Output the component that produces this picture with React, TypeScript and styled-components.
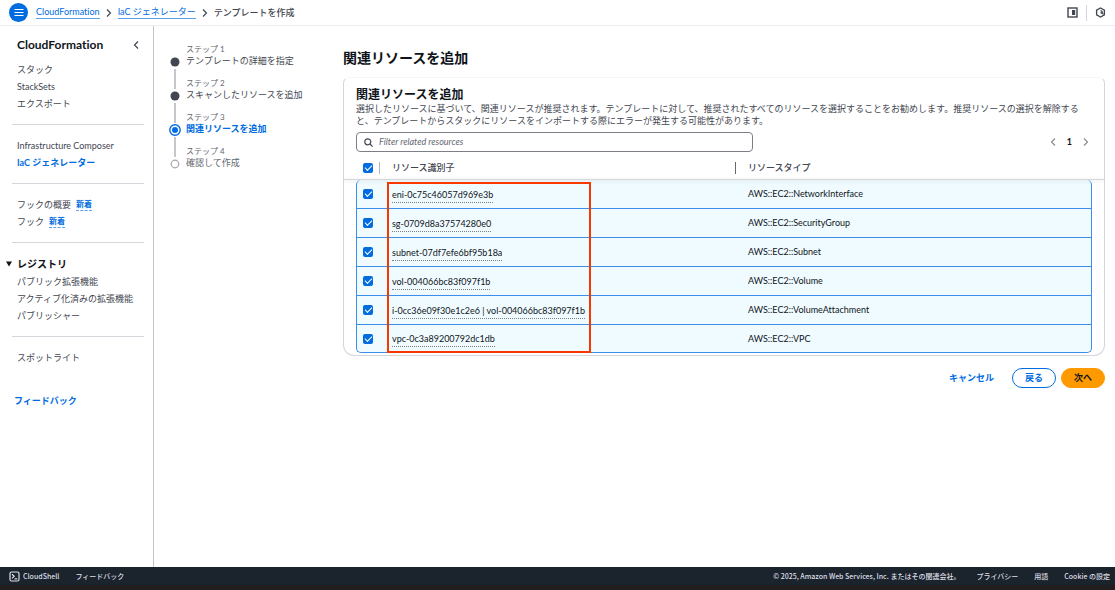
import React from "react";
import styled, { createGlobalStyle, css } from "styled-components";

const BLUE = "#006ce0";
const INK = "#0f141a";
const TEXT = "#424650";
const MUTED = "#656871";
const LINE = "#d5d5dc";

const GlobalStyle = createGlobalStyle`
  * { box-sizing: border-box; }
  body {
    margin: 0;
    background: #fff;
    color: ${TEXT};
    font-family: Lato, "Noto Sans CJK JP", sans-serif;
    font-size: 9px;
    line-height: 12px;
    font-variant-ligatures: none;
  }
  button, input { font: inherit; }
  a { color: inherit; text-decoration: none; }
`;

const Page = styled.div`
  min-height: 100vh;
  display: flex;
  flex-direction: column;
`;

const TopBar = styled.header`
  display: flex;
  align-items: center;
  justify-content: space-between;
  height: 26px;
  padding: 0 9px;
  border-bottom: 1px solid #ededf0;
`;

const Cluster = styled.div<{ $gap: number }>`
  display: flex;
  align-items: center;
  gap: ${(p) => p.$gap}px;
`;

const MenuButton = styled.button`
  display: grid;
  place-items: center;
  width: 19px;
  height: 19px;
  padding: 0;
  border: 0;
  border-radius: 50%;
  background: ${BLUE};
`;

const IconButton = styled.button`
  display: grid;
  place-items: center;
  padding: 0;
  border: 0;
  background: none;
  color: ${TEXT};
`;

const Crumbs = styled.nav`
  display: flex;
  align-items: center;
  gap: 5px;
  color: ${TEXT};
  font-weight: 500;
`;

const CrumbLink = styled.a`
  color: ${BLUE};
  font-weight: 400;
  border-bottom: 1px solid #5a9fea;
`;

const Separator = styled.span`
  width: 1px;
  height: 16px;
  background: ${LINE};
`;

const Body = styled.div`
  flex: 1;
  display: flex;
`;

const Sidebar = styled.aside`
  flex: 0 0 154px;
  padding: 10px 8px 0 12px;
  border-right: 1px solid #c3c4ca;
`;

const SideTitle = styled.div`
  display: flex;
  align-items: center;
  justify-content: space-between;
  height: 17px;
  padding: 0 5px;
  margin-bottom: 8px;
  color: ${INK};
  font-size: 12px;
  font-weight: 700;
`;

const NavGroup = styled.ul`
  list-style: none;
  margin: 0;
  padding: 0 0 12px 5px;
`;

const NavItem = styled.li<{ $active?: boolean }>`
  display: flex;
  align-items: center;
  gap: 5px;
  height: 17px;
  white-space: nowrap;
  ${(p) => p.$active && css`color: ${BLUE}; font-weight: 700;`}
`;

const Rule = styled.hr`
  height: 1px;
  margin: 0 1px 12px 0;
  border: 0;
  background: ${LINE};
`;

const NewBadge = styled.a`
  color: ${BLUE};
  font-size: 8px;
  line-height: 11px;
  font-weight: 700;
  border-bottom: 1px dashed #5a9fea;
`;

const SectionToggle = styled.button`
  display: flex;
  align-items: center;
  gap: 5px;
  height: 18px;
  margin-left: -6px;
  padding: 0;
  border: 0;
  background: none;
  color: ${INK};
  font-size: 10px;
  font-weight: 700;
`;

const FeedbackLink = styled.a`
  display: block;
  margin: 17px 0 0 2px;
  color: ${BLUE};
  font-weight: 700;
`;

const Steps = styled.ol`
  flex: 0 0 189px;
  list-style: none;
  margin: 0;
  padding: 17px 0 0 15px;
`;

const Step = styled.li`
  display: flex;
  gap: 5px;
  height: 34px;
`;

const StepRail = styled.span`
  display: flex;
  flex-direction: column;
  align-items: center;
  width: 12px;
  padding-top: 13px;
`;

const RailLine = styled.i`
  flex: 1;
  width: 2px;
  margin: 1px 0 -12px;
  background: #c6c6cd;
`;

const StepText = styled.div<{ $state: string }>`
  white-space: nowrap;
  color: ${(p) => (p.$state === "todo" ? MUTED : p.$state === "current" ? BLUE : TEXT)};
  font-weight: ${(p) => (p.$state === "current" ? 700 : 400)};
`;

const StepLabel = styled.div`
  color: ${MUTED};
  font-size: 8px;
  font-weight: 400;
`;

const Main = styled.main`
  flex: 1;
  min-width: 0;
  padding: 22px 10px 0 0;
`;

const PageTitle = styled.h1`
  margin: 0 0 9px;
  color: ${INK};
  font-size: 14px;
  line-height: 20px;
`;

const Card = styled.section`
  border: 1px solid ${LINE};
  border-top-color: #f6f6f8;
  border-radius: 6px 6px 11px 11px;
  padding: 9px 12px 2px;
`;

const CardTitle = styled.h2`
  margin: 0;
  color: ${INK};
  font-size: 12px;
  line-height: 16px;
`;

const Description = styled.p`
  margin: 0 0 5px;
`;

const Tools = styled.div`
  display: flex;
  align-items: center;
  justify-content: space-between;
`;

const SearchBox = styled.label`
  display: flex;
  align-items: center;
  gap: 6px;
  width: 54%;
  height: 20px;
  padding: 0 7px;
  border: 1px solid #7d7f87;
  border-radius: 4px;
  color: ${TEXT};
`;

const SearchInput = styled.input`
  flex: 1;
  min-width: 0;
  padding: 0;
  border: 0;
  outline: 0;
  background: none;
  &::placeholder { color: ${MUTED}; font-style: italic; opacity: 1; }
`;

const Pager = styled.nav`
  display: flex;
  align-items: center;
  gap: 10px;
  padding-right: 2px;
  color: ${INK};
  font-weight: 700;
`;

const PagerButton = styled(IconButton)`
  color: #8c8c94;
`;

const TableWrap = styled.div`
  position: relative;
`;

const Table = styled.table`
  width: 100%;
  table-layout: fixed;
  border-collapse: separate;
  border-spacing: 0;
  color: ${INK};
`;

const HeadRow = styled.tr`
  position: relative;
  height: 28px;
  th:first-child::after {
    content: "";
    position: absolute;
    left: -12px;
    right: -12px;
    bottom: 0;
    height: 1px;
    background: ${LINE};
    box-shadow: 0 1px 4px rgba(15, 20, 26, 0.18);
  }
`;

const HeadCell = styled.th`
  padding: 3px 0 0;
  text-align: left;
  font-weight: 500;
  color: ${TEXT};
`;

const HeadLabel = styled.span<{ $divider?: string }>`
  display: flex;
  align-items: center;
  height: 12px;
  ${(p) => p.$divider && css`border-right: 1px solid ${p.$divider};`}
`;

const SelectAllLabel = styled(HeadLabel)`
  width: 24px;
  padding-left: 7px;
`;

const IdLabel = styled(HeadLabel)`
  margin-right: 12px;
`;

const Row = styled.tr`
  height: 29px;
  td {
    padding: 0;
    background: #f0fbff;
    border-bottom: 1px solid #3b8fe8;
  }
  td:first-child { border-left: 1px solid #3b8fe8; }
  td:last-child { border-right: 1px solid #3b8fe8; }
  &:first-child td:first-child { border-top-left-radius: 5px; }
  &:first-child td:last-child { border-top-right-radius: 5px; }
  &:last-child { height: 28px; }
  &:last-child td:first-child { border-bottom-left-radius: 5px; }
  &:last-child td:last-child { border-bottom-right-radius: 5px; }
`;

const CheckWrap = styled.div`
  padding-left: 6px;
`;

const Checkbox = styled.input`
  appearance: none;
  display: grid;
  place-items: center;
  width: 10px;
  height: 10px;
  margin: 0;
  border-radius: 2px;
  background: ${BLUE};
  &:checked::before {
    content: "";
    width: 6px;
    height: 3px;
    border-left: 1px solid #fff;
    border-bottom: 1px solid #fff;
    transform: rotate(-45deg);
    margin-bottom: 2px;
  }
`;

const ResourceId = styled.a`
  display: inline-block;
  margin-top: 1px;
  line-height: 15px;
  border-bottom: 1px dotted #7d7f87;
`;

const Highlight = styled.div`
  position: absolute;
  left: 31px;
  top: 30px;
  width: 204px;
  bottom: 0;
  border: 2px solid #f93800;
  pointer-events: none;
`;

const Actions = styled.div`
  display: flex;
  justify-content: flex-end;
  gap: 5px;
  margin-top: 12px;
`;

const Button = styled.button<{ $kind: "link" | "normal" | "primary" }>`
  height: 20px;
  min-width: 44px;
  padding: 0 12px;
  border: 1px solid transparent;
  border-radius: 10px;
  background: none;
  color: ${BLUE};
  font-weight: 700;
  line-height: 12px;
  ${(p) => p.$kind === "normal" && css`border-color: ${BLUE};`}
  ${(p) => p.$kind === "primary" && css`background: #ff9900; border-color: #ff9900; color: ${INK};`}
`;

const Footer = styled.footer`
  display: flex;
  align-items: center;
  justify-content: space-between;
  height: 23px;
  padding: 0 5px 0 9px;
  border-bottom: 5px solid #211e1f;
  background: #1b232d;
  color: #dedee3;
  font-family: "Noto Sans CJK JP", sans-serif;
  font-size: 7px;
  font-weight: 500;
`;

const FooterLink = styled.a`
  display: flex;
  align-items: center;
  gap: 3px;
`;

const Chevron = ({ dir }: { dir: "left" | "right" }) => (
  <svg width="8" height="8" viewBox="0 0 8 8" fill="none" stroke="currentColor" strokeWidth="1.2">
    <path d={dir === "left" ? "M6 .5 2.5 4 6 7.5" : "M2 .5 5.5 4 2 7.5"} />
  </svg>
);

const StepDot = ({ state }: { state: string }) => {
  if (state === "current")
    return (
      <svg width="12" height="12" viewBox="0 0 12 12">
        <circle cx="6" cy="6" r="5.2" fill="#fff" stroke={BLUE} strokeWidth="1.4" />
        <circle cx="6" cy="6" r="3" fill={BLUE} />
      </svg>
    );
  return (
    <svg width="12" height="12" viewBox="0 0 12 12">
      {state === "done" ? (
        <circle cx="6" cy="6" r="4.5" fill={TEXT} />
      ) : (
        <circle cx="6" cy="6" r="3.8" fill="#fff" stroke="#a4a4ad" strokeWidth="1.2" />
      )}
    </svg>
  );
};

const steps = [
  { label: "ステップ 1", title: "テンプレートの詳細を指定", state: "done" },
  { label: "ステップ 2", title: "スキャンしたリソースを追加", state: "done" },
  { label: "ステップ 3", title: "関連リソースを追加", state: "current" },
  { label: "ステップ 4", title: "確認して作成", state: "todo" },
];

const resources = [
  ["eni-0c75c46057d969e3b", "AWS::EC2::NetworkInterface"],
  ["sg-0709d8a37574280e0", "AWS::EC2::SecurityGroup"],
  ["subnet-07df7efe6bf95b18a", "AWS::EC2::Subnet"],
  ["vol-004066bc83f097f1b", "AWS::EC2::Volume"],
  ["i-0cc36e09f30e1c2e6 | vol-004066bc83f097f1b", "AWS::EC2::VolumeAttachment"],
  ["vpc-0c3a89200792dc1db", "AWS::EC2::VPC"],
];

export default function App() {
  return (
    <Page lang="ja">
      <GlobalStyle />
      <TopBar>
        <Cluster $gap={8}>
          <MenuButton aria-label="メニュー">
            <svg width="10" height="9" viewBox="0 0 10 9" stroke="#fff" strokeWidth="1">
              <path d="M.5 1.5h9M.5 4.5h9M.5 7.5h9" />
            </svg>
          </MenuButton>
          <Crumbs>
            <CrumbLink href="#">CloudFormation</CrumbLink>
            <Chevron dir="right" />
            <CrumbLink href="#">IaC ジェネレーター</CrumbLink>
            <Chevron dir="right" />
            <span>テンプレートを作成</span>
          </Crumbs>
        </Cluster>
        <Cluster $gap={8}>
          <IconButton aria-label="分割パネル">
            <svg width="11" height="11" viewBox="0 0 11 11">
              <rect x="1" y="1" width="9" height="9" fill="none" stroke="currentColor" strokeWidth="1.4" />
              <path d="M5 3h3.2v5H5z" fill="currentColor" />
            </svg>
          </IconButton>
          <Separator />
          <IconButton aria-label="設定">
            <svg width="11" height="11" viewBox="0 0 11 11" fill="none" stroke="currentColor" strokeWidth="1.3">
              <path d="M5.5 1 9.4 3.2v4.6L5.5 10 1.6 7.8V3.2z" />
              <path d="M5.5 5.5 8.6 7.2M5.5 3.6a1.9 1.9 0 0 1 1.3 3.2" />
            </svg>
          </IconButton>
        </Cluster>
      </TopBar>

      <Body>
        <Sidebar>
          <SideTitle>
            CloudFormation
            <IconButton aria-label="閉じる"><Chevron dir="left" /></IconButton>
          </SideTitle>
          <NavGroup>
            <NavItem><a href="#">スタック</a></NavItem>
            <NavItem><a href="#">StackSets</a></NavItem>
            <NavItem><a href="#">エクスポート</a></NavItem>
          </NavGroup>
          <Rule />
          <NavGroup>
            <NavItem><a href="#">Infrastructure Composer</a></NavItem>
            <NavItem $active><a href="#">IaC ジェネレーター</a></NavItem>
          </NavGroup>
          <Rule />
          <NavGroup>
            <NavItem><a href="#">フックの概要</a><NewBadge href="#">新着</NewBadge></NavItem>
            <NavItem><a href="#">フック</a><NewBadge href="#">新着</NewBadge></NavItem>
          </NavGroup>
          <Rule />
          <SectionToggle aria-expanded="true">
            <svg width="6" height="6" viewBox="0 0 6 6"><path d="M0 .5h6L3 5.5z" fill="currentColor" /></svg>
            レジストリ
          </SectionToggle>
          <NavGroup>
            <NavItem><a href="#">パブリック拡張機能</a></NavItem>
            <NavItem><a href="#">アクティブ化済みの拡張機能</a></NavItem>
            <NavItem><a href="#">パブリッシャー</a></NavItem>
          </NavGroup>
          <Rule />
          <NavGroup>
            <NavItem><a href="#">スポットライト</a></NavItem>
          </NavGroup>
          <FeedbackLink href="#">フィードバック</FeedbackLink>
        </Sidebar>

        <Steps>
          {steps.map((s, i) => (
            <Step key={s.label}>
              <StepRail>
                <StepDot state={s.state} />
                {i < steps.length - 1 && <RailLine />}
              </StepRail>
              <StepText $state={s.state}>
                <StepLabel>{s.label}</StepLabel>
                {s.title}
              </StepText>
            </Step>
          ))}
        </Steps>

        <Main>
          <PageTitle>関連リソースを追加</PageTitle>
          <Card>
            <CardTitle>関連リソースを追加</CardTitle>
            <Description>
              選択したリソースに基づいて、関連リソースが推奨されます。テンプレートに対して、推奨されたすべてのリソースを選択することをお勧めします。推奨リソースの選択を解除すると、テンプレートからスタックにリソースをインポートする際にエラーが発生する可能性があります。
            </Description>
            <Tools>
              <SearchBox>
                <svg width="9" height="9" viewBox="0 0 9 9" fill="none" stroke="currentColor" strokeWidth="1.2">
                  <circle cx="3.8" cy="3.8" r="3" />
                  <path d="m6 6 2.6 2.6" />
                </svg>
                <SearchInput type="text" placeholder="Filter related resources" aria-label="Filter related resources" />
              </SearchBox>
              <Pager>
                <PagerButton aria-label="前へ"><Chevron dir="left" /></PagerButton>
                1
                <PagerButton aria-label="次のページ"><Chevron dir="right" /></PagerButton>
              </Pager>
            </Tools>
            <TableWrap>
              <Table>
                <colgroup>
                  <col width="36" />
                  <col />
                  <col width="344" />
                </colgroup>
                <thead>
                  <HeadRow>
                    <HeadCell>
                      <SelectAllLabel $divider="#b4b4bb">
                        <Checkbox type="checkbox" defaultChecked aria-label="すべて選択" />
                      </SelectAllLabel>
                    </HeadCell>
                    <HeadCell><IdLabel $divider={MUTED}>リソース識別子</IdLabel></HeadCell>
                    <HeadCell><HeadLabel>リソースタイプ</HeadLabel></HeadCell>
                  </HeadRow>
                </thead>
                <tbody>
                  {resources.map(([id, type]) => (
                    <Row key={id}>
                      <td>
                        <CheckWrap><Checkbox type="checkbox" defaultChecked aria-label={id} /></CheckWrap>
                      </td>
                      <td><ResourceId href="#">{id}</ResourceId></td>
                      <td>{type}</td>
                    </Row>
                  ))}
                </tbody>
              </Table>
              <Highlight />
            </TableWrap>
          </Card>
          <Actions>
            <Button $kind="link">キャンセル</Button>
            <Button $kind="normal">戻る</Button>
            <Button $kind="primary">次へ</Button>
          </Actions>
        </Main>
      </Body>

      <Footer>
        <Cluster $gap={16}>
          <FooterLink href="#">
            <svg width="11" height="11" viewBox="0 0 11 11" fill="none" stroke="currentColor" strokeWidth="1.2">
              <rect x="1" y="1" width="9" height="9" rx="1.5" />
              <path d="m3 3.2 2.2 2.1L3 7.4M5.6 7.8h2.6" />
            </svg>
            CloudShell
          </FooterLink>
          <FooterLink href="#">フィードバック</FooterLink>
        </Cluster>
        <Cluster $gap={16}>
          <span>© 2025, Amazon Web Services, Inc. またはその関連会社。</span>
          <FooterLink href="#">プライバシー</FooterLink>
          <FooterLink href="#">用語</FooterLink>
          <FooterLink href="#">Cookie の設定</FooterLink>
        </Cluster>
      </Footer>
    </Page>
  );
}
